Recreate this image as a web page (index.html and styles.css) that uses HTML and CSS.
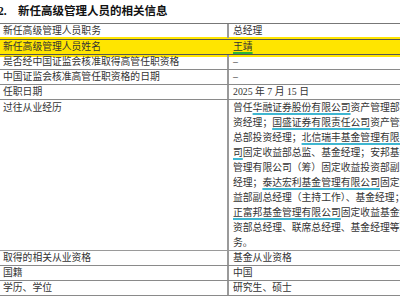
FILE: index.html
```html
<!DOCTYPE html>
<html lang="zh-CN">
<head>
<meta charset="utf-8">
<link rel="stylesheet" href="styles.css">
</head>
<body>
<div class="page">
  <h2 class="heading"><span class="num">2.</span><span>新任高级管理人员的相关信息</span></h2>
  <div class="table">
    <div class="row"><div class="k">新任高级管理人员职务</div><div class="v">总经理</div></div>
    <div class="row hl"><div class="k">新任高级管理人员姓名</div><div class="v"><span class="name">王靖</span></div></div>
    <div class="row"><div class="k">是否经中国证监会核准取得高管任职资格</div><div class="v">–</div></div>
    <div class="row"><div class="k">中国证监会核准高管任职资格的日期</div><div class="v">–</div></div>
    <div class="row"><div class="k">任职日期</div><div class="v">2025 年 7 月 15 日</div></div>
    <div class="row tall"><div class="k">过往从业经历</div><div class="v">
      <div>曾任<span class="co">华融证券股份有限公司</span>资产管理部投</div>
      <div>资经理；<span class="co">国盛证券有限责任公司</span>资产管理</div>
      <div>总部投资经理；<span class="co">北信瑞丰基金管理有限公</span></div>
      <div><span class="co">司</span>固定收益部总监、基金经理；安邦基金</div>
      <div>管理有限公司（筹）固定收益投资部副总</div>
      <div>经理；<span class="co">泰达宏利基金管理有限公司</span>固定收</div>
      <div>益部副总经理（主持工作）、基金经理；中</div>
      <div><span class="co">正富邦基金管理有限公司</span>固定收益基金投</div>
      <div>资部总经理、联席总经理、基金经理等职</div>
      <div>务。</div>
    </div></div>
    <div class="row"><div class="k">取得的相关从业资格</div><div class="v">基金从业资格</div></div>
    <div class="row"><div class="k">国籍</div><div class="v">中国</div></div>
    <div class="row"><div class="k">学历、学位</div><div class="v">研究生、硕士</div></div>
  </div>
</div>
</body>
</html>
```

FILE: styles.css
```css
html, body {
  margin: 0;
  padding: 0;
  background: #ffffff;
}
body {
  width: 400px;
  height: 300px;
  overflow: hidden;
  font-family: "Liberation Serif", "Noto Sans CJK SC", serif;
  color: #333333;
}
.page {
  width: 460px;
}
.heading {
  margin: 0 0 0 -2px;
  height: 23px;
  display: flex;
  align-items: center;
  font-size: 11.5px;
  font-weight: bold;
  color: #111111;
  line-height: 23px;
  padding-bottom: 0;
}
.heading .num {
  width: 20px;
  font-family: "Liberation Serif", serif;
}
.table {
  border-top: 1px solid #777777;
  font-size: 9.8px;
  line-height: 14px;
}
.row {
  display: flex;
  border-bottom: 1px solid #8a8a8a;
  white-space: nowrap;
}
.row .k {
  width: 224px;
  padding-left: 3px;
  flex: none;
}
.row .v {
  flex: 1;
  border-left: 2px solid #9a9a9a;
  padding-left: 4px;
  overflow: hidden;
}
.row.hl {
  border-top: 1px solid #555555;
  border-bottom: 1px solid #555555;
  background: #ffe500;
  box-shadow: 0 0 0 2px #ffe500;
}
.row.hl .v {
  border-left-color: #ffe500;
}
.row.tall {
  line-height: 15px;
  border-bottom-color: #9a9a9a;
}
.name {
  text-decoration: underline;
  text-decoration-color: #2fb52f;
  text-decoration-thickness: 1.5px;
  text-underline-offset: 2px;
}
.co {
  text-decoration: underline;
  text-decoration-color: #3fb6d0;
  text-decoration-thickness: 1.5px;
  text-underline-offset: 2px;
}
```
